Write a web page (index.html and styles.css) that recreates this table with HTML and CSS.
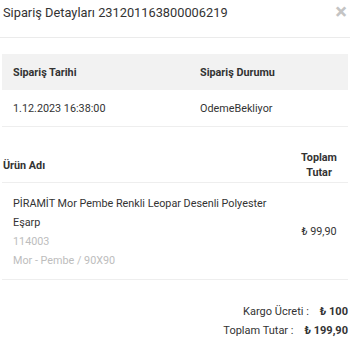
FILE: index.html
```html
<!DOCTYPE html>
<html lang="tr">
<head>
<meta charset="utf-8">
<link rel="stylesheet" href="styles.css">
</head>
<body>
<div class="modal">
  <div class="modal-header">
    <h4 class="title">Sipariş Detayları 231201163800006219</h4>
    <span class="close">&times;</span>
  </div>
  <div class="modal-body">
    <table class="info">
      <thead>
        <tr><th class="c1">Sipariş Tarihi</th><th>Sipariş Durumu</th></tr>
      </thead>
      <tbody>
        <tr><td class="c1">1.12.2023 16:38:00</td><td>OdemeBekliyor</td></tr>
      </tbody>
    </table>
    <table class="items">
      <thead>
        <tr><th class="name-h">Ürün Adı</th><th class="total-h">Toplam<br>Tutar</th></tr>
      </thead>
      <tbody>
        <tr>
          <td class="name">
            <div>PİRAMİT Mor Pembe Renkli Leopar Desenli Polyester Eşarp</div>
            <div class="muted">114003</div>
            <div class="muted">Mor - Pembe / 90X90</div>
          </td>
          <td class="price">₺ 99,90</td>
        </tr>
      </tbody>
    </table>
    <div class="summary">
      <div class="sum-row"><span class="label">Kargo Ücreti :</span><span class="val">₺ 100</span></div>
      <div class="sum-row"><span class="label">Toplam Tutar :</span><span class="val">₺ 199,90</span></div>
    </div>
  </div>
</div>
</body>
</html>
```
FILE: styles.css
```css
html, body {
  margin: 0;
  padding: 0;
  background: #fff;
}
body {
  font-family: Roboto, "Liberation Sans", sans-serif;
  color: #333;
  font-size: 10.8px;
}
.modal-header {
  display: flex;
  justify-content: space-between;
  align-items: flex-start;
  height: 37px;
  border-bottom: 1px solid #ebebeb;
  padding: 0 3px;
}
.title {
  margin: 0;
  padding-top: 3px;
  font-size: 12.8px;
  line-height: 20px;
  font-weight: 400;
  color: #333;
}
.close {
  color: #c4c4c4;
  font-size: 22px;
  font-weight: 700;
  line-height: 24px;
  margin-right: 0;
}
.modal-body {
  padding: 16px 2px 0;
}
table {
  width: 100%;
  border-collapse: collapse;
}
.info th, .info td {
  text-align: left;
  padding: 0 11px;
  height: 36px;
}
.info .c1 {
  width: 165px;
}
.info thead tr {
  background: #f2f2f2;
}
.info th {
  font-weight: 700;
}
.info td {
  border-bottom: 1px solid #eeeeee;
}
.items {
  margin-top: 18px;
}
.items th {
  font-weight: 700;
  line-height: 15px;
  padding: 5px 0 2px;
  border-bottom: 1px solid #eeeeee;
  vertical-align: middle;
}
.name-h {
  text-align: left;
  padding-left: 1px !important;
}
.total-h {
  text-align: center;
  width: 58px;
}
.items td {
  border-bottom: 1px solid #eeeeee;
  vertical-align: middle;
}
.name {
  padding: 11px 11px 9px;
  line-height: 19px;
}
.muted {
  color: #bdbdbd;
}
.price {
  text-align: center;
  white-space: nowrap;
}
.summary {
  padding-top: 22px;
  display: flex;
  flex-direction: column;
  align-items: flex-end;
}
.sum-row {
  line-height: 19px;
  height: 19px;
  display: flex;
  gap: 11px;
}
.label, .val {
  font-size: 11px;
}
.val {
  font-weight: 700;
}
```
